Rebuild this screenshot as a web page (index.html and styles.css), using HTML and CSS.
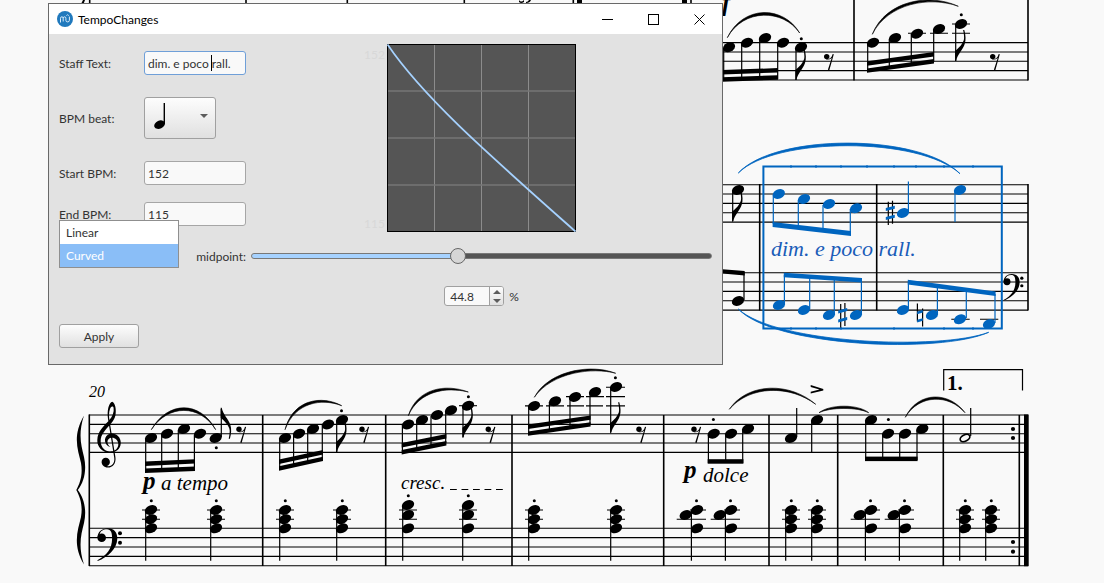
FILE: index.html
```html
<!DOCTYPE html>
<html lang="en">
<head>
    <meta charset="UTF-8">
    <meta name="viewport" content="width=device-width, initial-scale=1.0">
    <title>TempoChanges</title>
    <link rel="stylesheet" href="styles.css">
</head>
<body>
<div class="workspace">

    <svg class="score" viewBox="0 0 1104 583" role="img" aria-label="Score">
        <defs>
            <path id="staff" class="line" d="M0,0H939M0,9.35H939M0,18.7H939M0,28.05H939M0,37.4H939"/>
            <path id="staff-short" class="line" d="M0,0H328M0,9.35H328M0,18.7H328M0,28.05H328M0,37.4H328"/>
            <ellipse id="n" rx="6.4" ry="4.6" transform="rotate(-24)"/>
            <circle id="dot" r="1.5"/>
            <circle id="rdot" r="2.1"/>
            <g id="rest">
                <circle cx="0" cy="-4.4" r="2.7"/>
                <path d="M-1,-2C3,-1.4 5,-3 6,-7L7.1,-6.8L2.6,9.2L1.2,8.8L5,-3C3,-1.4 1,-1 -1,-2Z"/>
            </g>
            <path id="flag" d="M-.6,0V-10C2,-12 8.5,-18 8.4,-23C8.4,-26 8,-28 7.4,-31L8.6,-31C10,-26 10.4,-21 9,-17C7,-11 1.8,-7 .4,0Z"/>
            <g id="chord">
                <path class="line" d="M-9,510H9M-9,519.2H9"/>
                <path class="stem" d="M-5.3,510V560.7"/>
                <use href="#n" y="510"/><use href="#n" y="519.2"/><use href="#n" y="528.4"/>
                <use href="#dot" x=".3" y="500.7"/>
            </g>
            <g id="chord-high">
                <path class="line" d="M-9,510H9M-9,519.2H9"/>
                <path class="stem" d="M-5.3,505V560.7"/>
                <use href="#n" y="505"/><use href="#n" y="515"/><use href="#n" y="528.4"/>
                <use href="#dot" x=".3" y="495.7"/>
            </g>
            <g id="chord-cluster">
                <path class="line" d="M-7,510H9M-20.3,519.2H9"/>
                <path class="stem" d="M-5.6,512V560.7"/>
                <use href="#n" y="510"/><use href="#n" x="-11.3" y="515"/><use href="#n" y="528.4"/>
                <use href="#dot" x="-.5" y="500.7"/>
            </g>
            <g id="bass-clef">
                <circle r="4.3"/>
                <path d="M-4.2,0C-4.2,-6 .5,-9.5 6,-9.5C12,-9.5 15.8,-5.5 15.6,1C15.3,11 6,19.5 -4,23.3L-4.3,22.6C5,17.5 10.3,11 10.4,1C10.5,-5 9.3,-8.4 5.3,-8.4C1.5,-8.4 -1.6,-6.4 -2,-3.4Z"/>
                <circle cx="18.3" cy="-4.4" r="2"/>
                <circle cx="18.3" cy="5" r="2"/>
            </g>
            <g id="sharp">
                <path class="stem" d="M-2,-11V12.4M2.2,-12V11"/>
                <path d="M-4.5,-3.6L4.5,-6V-3L-4.5,-.6ZM-4.5,5.4L4.5,3V6L-4.5,8.4Z" transform="translate(0 -1)"/>
            </g>
            <g id="natural">
                <path class="stem" d="M-2.6,-11.6V6.6M2.6,-6.6V11.6"/>
                <path d="M-2.8,-3.4L2.8,-5V-2.4L-2.8,-.8ZM-2.8,4.8L2.8,3.2V5.8L-2.8,7.4Z"/>
            </g>
        </defs>

        <!-- upper system -->
        <path class="bar" d="M89.7,0V4M246,0V4M347.3,0V4M464.3,0V4M573.3,0V4M691,0V4"/>
        <path d="M577,0H582V4H577ZM682,0H687V4H682ZM81,4L83,0H85L83.5,4Z"/>
        <path d="M519,0Q521,3 524,0V2Q521,4 519,2ZM526,3Q530,3 531,0H529Q528,2 526,2Z"/>
        <use href="#staff-short" x="700" y="42.6"/>
        <path class="bar" d="M854,0V80.5M1028,0V80.5"/>
        <text class="dynamic" x="722" y="11">f</text>

        <path class="stem" d="M723.7,48V80M741.7,44V80M759.7,39V79M777.7,44V79M796,48V80"/>
        <path d="M722,70.1L778,68.1V72.5L722,74.5ZM722,77.3L778,75.3V79.7L722,81.7Z"/>
        <use href="#n" x="729" y="47.3"/><use href="#n" x="747" y="42.7"/><use href="#n" x="765" y="38"/>
        <use href="#n" x="783" y="42.7"/><use href="#n" x="801" y="47.3"/>
        <use href="#flag" x="796" y="80"/><use href="#dot" x="801.3" y="38.7"/>
        <use href="#rest" x="826.7" y="61"/>
        <path class="slur" d="M727.3,37.7C743,5 783,5 799.7,33C783,8.5 743,8.5 727.3,37.7Z"/>

        <path class="stem" d="M867.7,44V71M889.3,39V68M911.3,34V65M933.7,30V62M955.7,25V61"/>
        <path class="line" d="M908,33.3H926M930,33.3H948M952,33.3H970M952,24H970"/>
        <path d="M867,61.3L934,52V56.4L867,65.7ZM867,68.4L934,59.1V63.5L867,72.8Z"/>
        <use href="#n" x="873" y="42.7"/><use href="#n" x="895" y="38"/><use href="#n" x="917" y="33.7"/>
        <use href="#n" x="939" y="29"/><use href="#n" x="961" y="24"/>
        <use href="#flag" x="955.7" y="61"/><use href="#dot" x="961.3" y="14.7"/>
        <use href="#rest" x="992.7" y="61"/>
        <path class="slur" d="M872.3,34.3C886,0 930,-7 958.3,6.3C930,-4 888,3 872.3,34.3Z"/>

        <!-- middle system -->
        <use href="#staff-short" x="700" y="184.7"/>
        <use href="#staff-short" x="700" y="272.7"/>
        <path class="bar" d="M759.7,184V310.6M876.7,184V310.6M1028,184V310.6"/>
        <path class="stem" d="M732.7,191V221M744,272V300"/>
        <use href="#n" x="738" y="190"/><use href="#flag" x="732.7" y="221.7"/>
        <path d="M700,267.5L744.7,271V275.4L700,271.5Z"/>
        <use href="#n" x="738" y="301"/>
        <path class="line" d="M951.3,319.3H969.7M980,319.3H998.3"/>
        <use href="#bass-clef" transform="translate(1007 281.7) scale(.81)"/>

        <g class="selected">
            <rect class="range" x="763.4" y="166.5" width="238.4" height="162"/>
            <path class="tick" d="M791,165v3M816,165v3M841,165v3M867,165v3M894,165v3M916,165v3M944,165v3M973,165v3M791,327v3M816,327v3M841,327v3M894,327v3M944,327v3M973,327v3"/>
            <path class="stem" d="M773.3,195V224M798.3,200V227M823,205V230M850.3,209V234M908.4,213V181.5M955,191V222"/>
            <path d="M772.6,222L851,231V236L772.6,227Z"/>
            <use href="#n" x="778.8" y="194"/><use href="#n" x="804" y="199"/><use href="#n" x="829" y="204"/>
            <use href="#n" x="856" y="208.3"/><use href="#n" x="903" y="213"/><use href="#n" x="960" y="190"/>
            <use href="#sharp" x="890.3" y="212.7"/>
            <path class="slur" d="M738.3,173C775,133 920,133 960,173.7C920,136.5 775,136.5 738.3,173Z"/>

            <path class="stem" d="M784.4,304V275M809.7,309V277M834.3,314V279M861.4,314V280M908.4,309V282M937.4,314V286M966.3,318V290M995,323V294"/>
            <path d="M783.8,272.7L862,278V282.4L783.8,277.2ZM907.8,279.7L995.6,291.4V296L907.8,284.4Z"/>
            <use href="#n" x="779" y="305"/><use href="#n" x="804" y="310"/><use href="#n" x="829" y="315"/>
            <use href="#n" x="856" y="315"/><use href="#n" x="903" y="310"/><use href="#n" x="932" y="315"/>
            <use href="#n" x="960" y="319.3"/><use href="#n" x="989" y="324"/>
            <use href="#sharp" x="842.7" y="315"/><use href="#natural" x="920" y="315"/>
            <path class="slur" d="M738.3,309C774,347 940,354 988.7,332.3C940,350.5 776,344 738.3,309Z"/>
            <text class="expression large" x="771" y="256">dim. e poco rall.</text>
        </g>

        <!-- lower system -->
        <path d="M84,415.5C72,436 78,450 81,463C83,475 80,483 76.3,490C80,497 83,505 81,517C78,530 72,544 84,564.5C78,546 81,535 84,523C87,510 84,498 77.8,490C84,482 87,470 84,457C81,445 78,434 84,415.5Z"/>
        <use href="#staff" x="89" y="415"/>
        <use href="#staff" x="89" y="528.3"/>
        <path class="bar" d="M89.3,414.4V566M262.7,415V566M385.7,415V566M512,415V566M663.7,415V566M769,415V566M837.7,415V566M943.3,415V566M1019.3,415V566"/>
        <rect x="1024" y="414.5" width="4.7" height="151.7"/>
        <text class="number" x="89" y="397">20</text>

        <!-- treble clef -->
        <path d="M110.4,447C104.5,445.5 103,438 108,434.5C114,431.5 121,436 120.8,443C120.6,449.5 115,453 109.5,452.8C102,452.5 97,446.5 97.3,440C97.6,431 104,426 109,420.5C112.5,416.5 114.3,412 113.6,408C113.2,405.8 111,406 110,409C108.8,412 108.8,416 109.4,420L115.4,457C116.4,463.5 112.4,467.8 107.8,467.6C104,467.4 101.6,465 101.6,462C101.6,459.5 103.4,457.8 105.7,457.8C108.2,457.8 109.9,459.7 109.9,462C109.9,464 108.6,465.4 107,466C111,467.6 115.2,463.5 114.2,457.6L108,419C106.8,410 109,402.5 112.3,401.7C115.4,403 116.5,410 115.4,415.5C114,421.5 108.6,426 105,430.5C101.6,434.6 100.4,438 100.7,442C101.2,447.6 105,451.4 110,451.4C115,451.4 118.4,448.6 118.3,444C118.2,439.8 114.5,437.2 111,437.8C106.7,438.6 106.2,444.4 110.4,447Z"/>
        <use href="#bass-clef" x="101.7" y="537.7"/>

        <path class="stem" d="M145.7,439V471M161.7,435V470M178.3,430V470M194.4,435V470M221.3,437V409"/>
        <path d="M145,461.5L195,459.2V463.6L145,465.9ZM145,468.5L195,466.5V470.9L145,472.9Z"/>
        <use href="#n" x="151" y="438"/><use href="#n" x="167" y="433.7"/><use href="#n" x="184" y="429"/>
        <use href="#n" x="200" y="433.7"/><use href="#n" x="215.7" y="438"/>
        <use href="#flag" transform="translate(221.3 407.7) scale(1 -1)"/>
        <use href="#dot" x="216.3" y="447.7"/>
        <use href="#rest" x="239" y="433.7"/>
        <path class="slur" d="M151.3,429.7C168,400.5 200,400.5 215.7,429.7C200,404 168,404 151.3,429.7Z"/>
        <text class="dynamic" x="143" y="489">p</text>
        <text class="expression" x="161" y="490">a tempo</text>

        <path class="stem" d="M279.7,439V469M293.6,435V466M307.7,430V463M322.3,425V460M336.7,421V452"/>
        <path d="M279,459.6L323,450V454.4L279,464ZM279,466.3L323,456.7V461.1L279,470.7Z"/>
        <use href="#n" x="285" y="438"/><use href="#n" x="299" y="433.7"/><use href="#n" x="313" y="429"/>
        <use href="#n" x="328" y="424.5"/><use href="#n" x="342" y="420"/>
        <use href="#flag" x="336.7" y="452"/><use href="#dot" x="341.5" y="410.7"/>
        <use href="#rest" x="362" y="433.7"/>
        <path class="slur" d="M285,429.7C293,399 322,395 341.7,405.7C322,398 295,402 285,429.7Z"/>

        <path class="stem" d="M402.4,425V452M416.7,421V449M431,416V446M445.7,411V443M463,407V437"/>
        <path class="line" d="M459,405.7H477"/>
        <path d="M401.7,443L446.4,434V438.4L401.7,447.4ZM401.7,450L446.4,441V445.4L401.7,454.4Z"/>
        <use href="#n" x="408" y="424.5"/><use href="#n" x="422" y="420"/><use href="#n" x="437" y="415"/>
        <use href="#n" x="451" y="410.3"/><use href="#n" x="468" y="405.7"/>
        <use href="#flag" x="463" y="437.7"/><use href="#dot" x="468.4" y="396.7"/>
        <use href="#rest" x="488.3" y="433.7"/>
        <path class="slur" d="M408.3,415.7C417,388 446,383.5 468.3,392C446,386.5 419,391 408.3,415.7Z"/>
        <text class="expression small" x="401" y="489">cresc.</text>
        <path class="extender" d="M450,489.5H503"/>

        <path class="stem" d="M528.7,407V434M549.4,402V431M570,398V428M590,393V425M610.7,388V432"/>
        <path class="line" d="M525,405.9H543M546,405.9H564M567,405.9H584M586,405.9H603M606,405.9H625M566,396.6H584M586,396.6H604M606,396.6H625M606,387.2H625"/>
        <path d="M528,424.6L590.6,415.4V419.8L528,429ZM528,431.4L590.6,422.2V426.6L528,435.8Z"/>
        <use href="#n" x="534" y="406"/><use href="#n" x="555" y="401.3"/><use href="#n" x="575" y="397"/>
        <use href="#n" x="595" y="392"/><use href="#n" x="616" y="387"/>
        <use href="#flag" x="610.7" y="433.3"/><use href="#dot" x="615.4" y="377.7"/>
        <use href="#rest" x="639" y="433.7"/>
        <path class="slur" d="M534.3,397.3C550,369 593,364 615.7,373.3C593,367 552,372 534.3,397.3Z"/>

        <use href="#rest" x="694" y="433.7"/>
        <path class="stem" d="M708.4,435V463M725.7,435V463M742.7,430V463"/>
        <rect x="707.7" y="459.2" width="35.7" height="4.5"/>
        <use href="#n" x="713.7" y="433.7"/><use href="#n" x="731" y="433.7"/><use href="#n" x="748" y="429"/>
        <use href="#dot" x="713.4" y="419.4"/>
        <path class="slur" d="M729.3,409.3C748,382 790,382 815.7,404.3C790,385 750,385 729.3,409.3Z"/>
        <text class="dynamic" x="684" y="478">p</text>
        <text class="expression" x="703" y="482">dolce</text>

        <path class="stem" d="M796.7,437V408M811.7,421V452.3"/>
        <use href="#n" x="791" y="438"/><use href="#n" x="817" y="420"/>
        <path d="M810.7,385L823.3,389V390.4L810.7,393.6V391.8L819.5,389.6L810.7,387Z"/>
        <path class="slur" d="M819,412.7C830,404 858,404 868.7,412.7C858,407 830,407 819,412.7Z"/>

        <path class="stem" d="M865.7,421V460M882.7,435V460M899.7,435V460M917,430V460"/>
        <rect x="865" y="456.6" width="52.6" height="4.5"/>
        <use href="#n" x="871" y="420"/><use href="#n" x="888" y="433.7"/><use href="#n" x="905" y="433.7"/>
        <use href="#n" x="922.3" y="429"/>
        <use href="#dot" x="888.4" y="419.4"/>
        <path class="slur" d="M905.3,417.3C918,391 949,391 965,412.7C949,394 919,394 905.3,417.3Z"/>

        <path class="stem" d="M970.7,436V408"/>
        <ellipse class="half" cx="965" cy="438" rx="5.2" ry="3.2" transform="rotate(-28 965 438)"/>
        <path class="stem" fill="none" d="M943.7,390.5V369.6H1022.5V390.5"/>
        <text class="volta" x="947" y="390">1.</text>
        <use href="#rdot" x="1013" y="429"/><use href="#rdot" x="1013" y="438"/>
        <use href="#rdot" x="1013" y="542"/><use href="#rdot" x="1013" y="551.7"/>

        <use href="#chord" x="151"/><use href="#chord" x="216"/>
        <use href="#chord" x="285"/><use href="#chord" x="342"/>
        <use href="#chord-high" x="408"/><use href="#chord-high" x="468"/>
        <use href="#chord" x="534"/><use href="#chord" x="616"/>
        <use href="#chord-cluster" x="697"/><use href="#chord-cluster" x="731"/>
        <use href="#chord" x="791"/><use href="#chord" x="817"/>
        <use href="#chord-cluster" x="871"/><use href="#chord-cluster" x="905"/>
        <use href="#chord" x="965"/><use href="#chord" x="991"/>
    </svg>

    <div class="dialog" role="dialog" aria-labelledby="dialog-title">
        <div class="titlebar">
            <svg class="logo" viewBox="0 0 16 16" aria-hidden="true">
                <circle cx="8" cy="8" r="8" fill="#2079bd"/>
                <path d="M3.5,11.5V7.3Q3.5,5.8 4.9,5.8Q6.2,5.8 6.2,7.3V10.5M6.2,7.3Q6.2,5.8 7.5,5.8Q8.9,5.8 8.9,7.3V9.3Q8.9,10.9 10.6,10.9Q12.4,10.9 12.4,9.3V5.6" fill="none" stroke="#d9ecfa" stroke-width="1"/>
                <path d="M9.4,4.6Q10.5,2.9 11.8,4.6" fill="none" stroke="#d9ecfa" stroke-width=".9"/>
            </svg>
            <span class="title" id="dialog-title">TempoChanges</span>
            <button class="winbtn" aria-label="Minimize">
                <svg viewBox="0 0 11 11"><path d="M0,5.5H11"/></svg>
            </button>
            <button class="winbtn" aria-label="Maximize">
                <svg viewBox="0 0 11 11"><rect x=".5" y=".5" width="10" height="10"/></svg>
            </button>
            <button class="winbtn" aria-label="Close">
                <svg viewBox="0 0 11 11"><path d="M.5,.5L10.5,10.5M10.5,.5L.5,10.5"/></svg>
            </button>
        </div>

        <form class="content">
            <div class="fields">
                <div class="row">
                    <label for="staff-text">Staff Text:</label>
                    <span class="textbox">
                        <input class="input focused" type="text" id="staff-text" value="dim. e poco rall.">
                        <span class="caret"></span>
                    </span>
                </div>
                <div class="row">
                    <label for="beat">BPM beat:</label>
                    <button class="beat" type="button" id="beat" aria-haspopup="listbox" aria-label="Quarter note">
                        <svg class="beat-note" viewBox="0 0 12 28" aria-hidden="true">
                            <ellipse cx="5.6" cy="22.6" rx="5.6" ry="4" transform="rotate(-24 5.6 22.6)"/>
                            <path d="M9.6,1H11V22H9.6Z"/>
                        </svg>
                        <span class="arrow down"></span>
                    </button>
                </div>
                <div class="bpm">
                    <div class="row">
                        <label for="start-bpm">Start BPM:</label>
                        <input class="input" type="text" id="start-bpm" value="152">
                    </div>
                    <div class="row">
                        <label for="end-bpm">End BPM:</label>
                        <input class="input" type="text" id="end-bpm" value="115">
                    </div>
                </div>
            </div>

            <div class="preview">
                <div class="scale"><span>152</span><span>115</span></div>
                <svg class="graph" viewBox="0 0 189 188" aria-hidden="true">
                    <rect x=".5" y=".5" width="188" height="187" fill="#555" stroke="#000"/>
                    <path d="M47.5,1V187M94.5,1V187M141.5,1V187" stroke="#8c8c8c"/>
                    <path d="M1,47H188M1,94H188M1,141H188" stroke="#757575" stroke-width="1.6"/>
                    <path d="M.5,.5C36,53 100,109 188.5,187.5" fill="none" stroke="#a6d2ff" stroke-width="1.8"/>
                </svg>
            </div>

            <div class="curve">
                <select class="popup" size="2" aria-label="Curve type">
                    <option>Linear</option>
                    <option selected>Curved</option>
                </select>
                <label for="midpoint">midpoint:</label>
            </div>
            <input class="slider" type="range" id="midpoint" min="0" max="100" step="0.1" value="44.8" style="--value: 44.8%">

            <div class="percent">
                <span class="spin">
                    <input type="text" id="midpoint-value" value="44.8" aria-label="Midpoint percent">
                    <span class="steps">
                        <button type="button" aria-label="Increase"><span class="arrow up"></span></button>
                        <button type="button" aria-label="Decrease"><span class="arrow down"></span></button>
                    </span>
                </span>
                <label for="midpoint-value">%</label>
            </div>

            <button class="apply" type="button">Apply</button>
        </form>
    </div>
</div>
</body>
</html>
```

FILE: styles.css
```css
* {
    box-sizing: border-box;
}
body {
    margin: 0;
    background-color: #f9f9f9;
    font-family: Lato, "Open Sans", sans-serif;
    font-size: 12px;
    color: #333;
}
input, button, select {
    font: inherit;
    color: inherit;
    margin: 0;
}
.workspace {
    position: relative;
    overflow: hidden;
}

/* score */
.score {
    display: block;
    width: 100%;
    height: auto;
    fill: #000;
    stroke: none;
}
.line {
    stroke: #000;
    stroke-width: 1.1;
}
.stem {
    stroke: #000;
    stroke-width: 1.2;
}
.bar {
    stroke: #000;
    stroke-width: 1.6;
}
.slur {
    stroke: #000;
    stroke-width: 0.6;
}
.half {
    fill: none;
    stroke: #000;
    stroke-width: 1.7;
}
.extender {
    stroke: #000;
    stroke-width: 1.1;
    stroke-dasharray: 6.8 4.7;
}
.score text {
    font-family: "Liberation Serif", "Times New Roman", serif;
}
.expression {
    font-size: 21px;
    font-style: italic;
}
.expression.small {
    font-size: 19px;
}
.expression.large {
    font-size: 22px;
    fill: #1a5cb8;
}
.dynamic {
    font-size: 25px;
    font-weight: bold;
    font-style: italic;
}
.number {
    font-size: 16px;
    font-style: italic;
}
.volta {
    font-size: 21px;
    font-weight: bold;
}
.selected {
    fill: #0065bf;
}
.selected .stem, .selected .slur, .tick {
    stroke: #0065bf;
}
.selected .slur {
    stroke-width: 0.8;
}
.range {
    fill: none;
    stroke: #0065bf;
    stroke-width: 2;
}

/* dialog window */
.dialog {
    position: absolute;
    top: 3px;
    left: 48px;
    width: 675px;
    border: 1px solid #696969;
    background-color: #e2e2e2;
}
.titlebar {
    display: flex;
    align-items: center;
    height: 30px;
    padding-left: 8px;
    background-color: #fff;
    color: #000;
}
.logo {
    width: 16px;
    height: 16px;
}
.title {
    flex: 1;
    margin-left: 5px;
}
.winbtn {
    display: flex;
    align-items: center;
    justify-content: center;
    width: 46px;
    height: 30px;
    padding: 0;
    border: none;
    background: none;
}
.winbtn svg {
    width: 11px;
    height: 11px;
    fill: none;
    stroke: #000;
}

/* form */
.content {
    display: grid;
    grid-template-columns: 187px 1fr;
    column-gap: 5px;
    padding: 10px 10px 16px;
}
.fields {
    display: flex;
    flex-direction: column;
    gap: 22px;
    padding-top: 7px;
}
.bpm {
    display: flex;
    flex-direction: column;
    gap: 17px;
}
.row {
    display: grid;
    grid-template-columns: 85px 1fr;
    align-items: center;
    justify-items: start;
}
.textbox {
    position: relative;
    width: 100%;
}
.input {
    display: block;
    width: 100%;
    height: 24px;
    padding: 0 3px;
    border: 1px solid #a6a6a6;
    border-radius: 3px;
    background-color: #f9f9f9;
    outline: none;
}
.input.focused {
    border-color: #6f9fd8;
}
.caret {
    position: absolute;
    top: 4px;
    left: 67px;
    width: 1px;
    height: 16px;
    background-color: #000;
}
.beat, .apply {
    border: 1px solid #a0a0a0;
    border-radius: 3px;
    background: linear-gradient(#fdfdfd, #e0e0e0);
}
.beat {
    display: flex;
    align-items: center;
    justify-content: space-between;
    width: 72px;
    height: 42px;
    padding: 0 7px 4px 9px;
}
.beat-note {
    width: 12px;
    height: 28px;
}
.arrow {
    display: block;
    width: 0;
    border: 4px solid transparent;
}
.arrow.down {
    border-top-color: #5c5c5c;
    border-bottom: 0;
}
.arrow.up {
    border-bottom-color: #5c5c5c;
    border-top: 0;
}
.preview {
    display: grid;
    grid-template-columns: 1fr 189px 1fr;
    height: 189px;
}
.scale {
    display: flex;
    flex-direction: column;
    justify-content: space-between;
    align-items: flex-end;
    padding: 3px 2px 2px 0;
    color: #d8d8d8;
}
.graph {
    width: 189px;
    height: 188px;
}
.curve {
    position: relative;
    display: flex;
    align-items: center;
    justify-content: flex-end;
    height: 24px;
    margin-top: 11px;
}
.popup {
    position: absolute;
    left: 0;
    bottom: 0;
    width: 120px;
    height: 48px;
    padding: 0;
    border: 1px solid #8f8f8f;
    border-radius: 0;
    background-color: #fff;
    outline: none;
    overflow: hidden;
}
.popup option {
    height: 23px;
    padding: 4px 6px 0;
}
.popup option:checked {
    background: #8abef7 linear-gradient(#8abef7, #8abef7);
    color: #fff;
}
.slider {
    -webkit-appearance: none;
    appearance: none;
    align-self: end;
    width: 100%;
    height: 24px;
    background: none;
    outline: none;
}
.slider::-webkit-slider-runnable-track {
    height: 6px;
    border: 1px solid #787878;
    border-radius: 3px;
    background: linear-gradient(to right, #a6d2ff var(--value), #555 var(--value));
}
.slider::-webkit-slider-thumb {
    -webkit-appearance: none;
    width: 16px;
    height: 16px;
    margin-top: -6px;
    border: 1px solid #666;
    border-radius: 50%;
    background-color: #d6d6d6;
}
.percent {
    grid-column: 2;
    display: flex;
    align-items: center;
    justify-content: center;
    gap: 5px;
    height: 20px;
    margin-top: 18px;
}
.spin {
    display: flex;
    width: 60px;
    height: 20px;
    border: 1px solid #a0a0a0;
    border-radius: 3px;
    background-color: #f9f9f9;
    overflow: hidden;
}
.spin input {
    flex: 1;
    min-width: 0;
    padding: 0 5px;
    border: none;
    background: none;
    outline: none;
}
.steps {
    display: flex;
    flex-direction: column;
    width: 14px;
    border-left: 1px solid #a0a0a0;
    background: linear-gradient(#fdfdfd, #e0e0e0);
}
.steps button {
    flex: 1;
    display: flex;
    align-items: center;
    justify-content: center;
    padding: 0;
    border: none;
    background: none;
}
.apply {
    width: 80px;
    height: 24px;
    margin-top: 18px;
    padding: 0;
}
```
